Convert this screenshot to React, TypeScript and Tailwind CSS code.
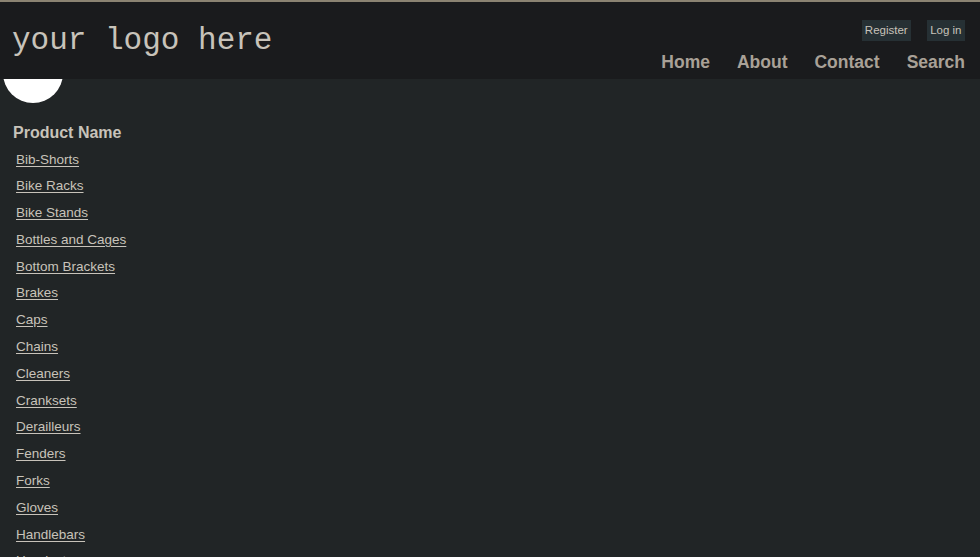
import React from "react";

const items = [
  "Bib-Shorts",
  "Bike Racks",
  "Bike Stands",
  "Bottles and Cages",
  "Bottom Brackets",
  "Brakes",
  "Caps",
  "Chains",
  "Cleaners",
  "Cranksets",
  "Derailleurs",
  "Fenders",
  "Forks",
  "Gloves",
  "Handlebars",
  "Headsets",
];

export default function App() {
  return (
    <div className="relative min-h-[557px] w-full overflow-hidden bg-[#212526] font-['Liberation_Sans',Arial,sans-serif] text-[#c8c3ba]">
      <div className="absolute left-[3px] top-[43px] z-0 h-[60px] w-[60px] rounded-full bg-white" />
      <header className="relative z-10 flex h-[79px] items-start justify-between border-t-2 border-[#8b8372] bg-[#1a1b1d]">
        <div className="pl-[12px] pt-[21px] font-['Liberation_Mono',monospace] text-[31px] leading-[36px] text-[#c8c3ba]">
          your logo here
        </div>
        <div className="flex flex-col items-end pr-[15px] pt-[18px]">
          <div className="flex gap-[16px] text-[11.5px] leading-[21px] text-[#c8c3ba]">
            <span className="bg-[#263034] px-[3px]">Register</span>
            <span className="bg-[#263034] px-[3.5px]">Log in</span>
          </div>
          <nav className="mt-[10px] flex gap-[27px] text-[17.5px] font-bold leading-[22px] text-[#a9a197]">
            <span>Home</span>
            <span>About</span>
            <span>Contact</span>
            <span>Search</span>
          </nav>
        </div>
      </header>
      <main className="relative z-10 pl-[13px] pt-[44px]">
        <h2 className="text-[16px] font-bold leading-[20px] text-[#c8c3ba]">Product Name</h2>
        <ul className="mt-[3.5px] pl-[3px]">
          {items.map((it) => (
            <li key={it} className="h-[26.8px] text-[13.5px] leading-[26.8px]">
              <a className="underline underline-offset-[2px]">{it}</a>
            </li>
          ))}
        </ul>
      </main>
    </div>
  );
}
